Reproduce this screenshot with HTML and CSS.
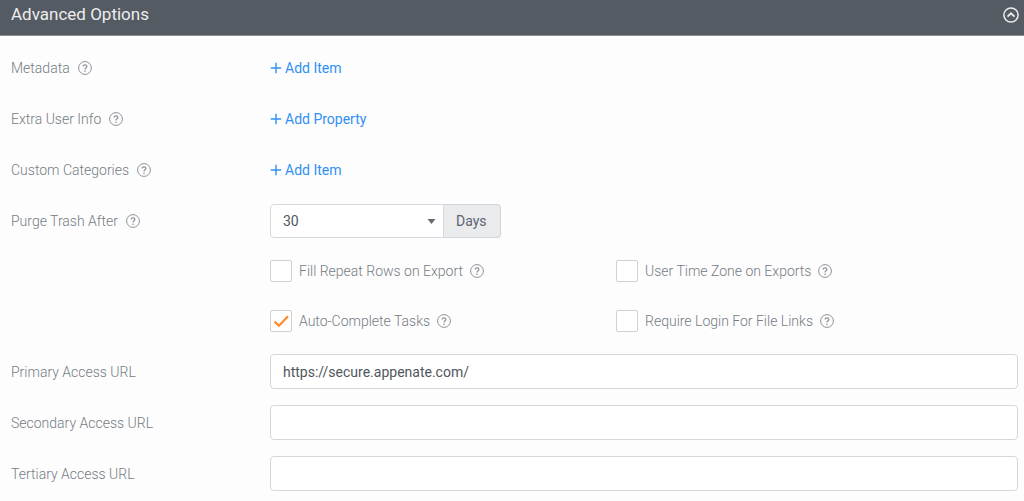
FILE: index.html
```html
<!DOCTYPE html>
<html lang="en">
<head>
<meta charset="utf-8">
<meta name="viewport" content="width=device-width, initial-scale=1">
<title>Advanced Options</title>
<link rel="stylesheet" href="styles.css">
</head>
<body>
<svg class="defs" aria-hidden="true">
  <symbol id="help" viewBox="0 0 14 14">
    <circle cx="7" cy="7" r="6.4" fill="none" stroke="currentColor" stroke-width="1"/>
    <path d="M5.1 5.5C5.1 3.2 8.9 3.2 8.9 5.5C8.9 6.8 7 6.8 7 8.4" fill="none" stroke="currentColor" stroke-width="1.2"/>
    <circle cx="7" cy="10.2" r=".8" fill="currentColor"/>
  </symbol>
  <symbol id="plus" viewBox="0 0 12 12">
    <path d="M6 .8V11.2M.8 6H11.2" fill="none" stroke="currentColor" stroke-width="1.4"/>
  </symbol>
</svg>
<header class="header">
  <h1 class="title">Advanced Options</h1>
  <button class="collapse" type="button" aria-label="Collapse">
    <svg viewBox="0 0 16 16" width="16" height="16" fill="none" stroke="currentColor"><circle cx="8" cy="8" r="7.1" stroke-width="1.5"/><path d="M4.5 9.6L8 6.3L11.5 9.6" stroke-width="1.9"/></svg>
  </button>
</header>
<form class="options">
  <div class="row">
    <div class="label">Metadata <svg class="help"><use href="#help"/></svg></div>
    <a class="add" href="#"><svg class="plus"><use href="#plus"/></svg>Add Item</a>
  </div>
  <div class="row">
    <div class="label">Extra User Info <svg class="help"><use href="#help"/></svg></div>
    <a class="add" href="#"><svg class="plus"><use href="#plus"/></svg>Add Property</a>
  </div>
  <div class="row">
    <div class="label">Custom Categories <svg class="help"><use href="#help"/></svg></div>
    <a class="add" href="#"><svg class="plus"><use href="#plus"/></svg>Add Item</a>
  </div>
  <div class="row">
    <label class="label" for="purge">Purge Trash After <svg class="help"><use href="#help"/></svg></label>
    <div class="group">
      <div class="picker">
        <select class="select" id="purge"><option>30</option></select>
        <svg class="caret" viewBox="0 0 8 5"><path d="M0 0H8L4 5Z" fill="currentColor"/></svg>
      </div>
      <span class="unit">Days</span>
    </div>
  </div>
  <div class="row checks">
    <label class="check"><input class="box" type="checkbox"><span>Fill Repeat Rows on Export</span><svg class="help"><use href="#help"/></svg></label>
    <label class="check"><input class="box" type="checkbox"><span>User Time Zone on Exports</span><svg class="help"><use href="#help"/></svg></label>
  </div>
  <div class="row checks">
    <label class="check"><span class="tickwrap"><input class="box" type="checkbox" checked><svg class="tick" viewBox="0 0 22 22"><path d="M4.5 11.6L9 15.8L18 6.2" fill="none" stroke="currentColor" stroke-width="2.2"/></svg></span><span>Auto-Complete Tasks</span><svg class="help"><use href="#help"/></svg></label>
    <label class="check"><input class="box" type="checkbox"><span>Require Login For File Links</span><svg class="help"><use href="#help"/></svg></label>
  </div>
  <div class="row">
    <label class="label" for="url1">Primary Access URL</label>
    <input class="text" id="url1" type="text" value="https://secure.appenate.com/">
  </div>
  <div class="row">
    <label class="label" for="url2">Secondary Access URL</label>
    <input class="text" id="url2" type="text">
  </div>
  <div class="row">
    <label class="label" for="url3">Tertiary Access URL</label>
    <input class="text" id="url3" type="text">
  </div>
</form>
</body>
</html>
```
FILE: styles.css
```css
* { box-sizing: border-box; }
body {
  margin: 0;
  background: #fdfdfd;
  color: #757c84;
  font: 300 14px/20px Roboto, sans-serif;
}
.defs { position: absolute; width: 0; height: 0; }
.header {
  display: flex;
  align-items: center;
  justify-content: space-between;
  padding: 3px 5px 9px 11px;
  background: #555b63;
  border-bottom: 1px solid #8b8f95;
  color: #eceded;
}
.title { margin: 0; font-size: 17px; line-height: 23px; font-weight: 400; }
.collapse { display: flex; padding: 0; border: 0; background: none; color: inherit; }
.options { padding: 6px 6px 0 11px; }
.row {
  display: grid;
  grid-template-columns: 259px 1fr;
  align-items: center;
  min-height: 51px;
}
.label { display: flex; align-items: center; gap: 8px; }
.help { width: 14px; height: 14px; flex: none; color: #8d9298; }
.add {
  display: flex;
  align-items: center;
  gap: 3px;
  justify-self: start;
  color: #3090f5;
  font-weight: 400;
  text-decoration: none;
}
.plus { width: 12px; height: 12px; }
.group { display: flex; }
.picker { position: relative; width: 174px; }
.select {
  display: block;
  width: 100%;
  height: 34px;
  padding: 0 12px;
  border: 1px solid #d5dae0;
  border-radius: 4px 0 0 4px;
  background: #fff;
  color: #50565d;
  font: 400 14px/20px Roboto, sans-serif;
  appearance: none;
}
.caret { position: absolute; right: 8px; top: 15px; width: 9px; height: 5px; color: #666b70; pointer-events: none; }
.unit {
  padding: 6px 13px 6px 12px;
  border: 1px solid #d0d5dc;
  border-left: 0;
  border-radius: 0 4px 4px 0;
  background: #e9ebed;
  color: #5b6570;
  font-weight: 400;
}
.checks {
  grid-template-columns: 1fr 1fr;
  padding-left: 259px;
  padding-right: 56px;
  min-height: 50px;
}
.check { display: flex; align-items: center; gap: 7px; }
.box {
  display: block;
  width: 22px;
  height: 22px;
  margin: 0;
  border: 1px solid #d3d1c9;
  border-radius: 2px;
  background: #fff;
  appearance: none;
}
.tickwrap { position: relative; }
.tick { position: absolute; inset: 0; color: #ff8a2b; pointer-events: none; visibility: hidden; }
.box:checked + .tick { visibility: visible; }
.text {
  width: 100%;
  height: 35px;
  padding: 0 12px;
  border: 1px solid #d3d8de;
  border-radius: 4px;
  background: #fff;
  color: #50565d;
  font: 400 14px/20px Roboto, sans-serif;
}
```
